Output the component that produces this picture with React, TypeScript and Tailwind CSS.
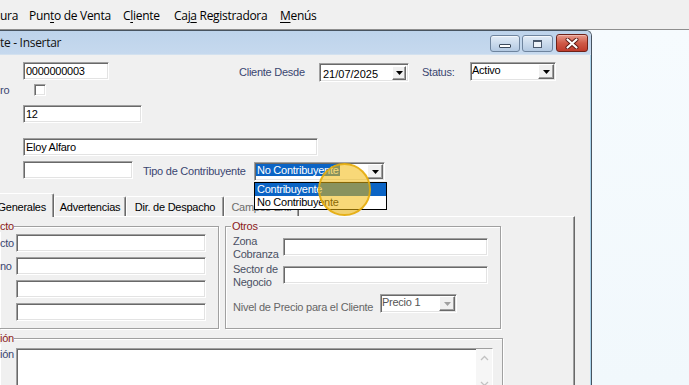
import React from "react";

const sunken =
  "bg-white border border-[#a0a0a0] border-r-white border-b-white shadow-[inset_1px_1px_0_#696969,inset_-1px_-1px_0_#e3e3e3]";
const raised =
  "bg-[#f0f0f0] border border-t-white border-l-white border-r-[#696969] border-b-[#696969] shadow-[inset_-1px_-1px_0_#a0a0a0]";

const Arrow: React.FC<{ color?: string }> = ({ color = "#000" }) => (
  <svg width="7" height="4" viewBox="0 0 7 4">
    <polygon points="0,0 7,0 3.5,4" fill={color} />
  </svg>
);

const TextBox: React.FC<{ w: string; value?: string }> = ({ w, value }) => (
  <div className={`${w} h-[18px] ${sunken} flex items-center pl-[2px] text-black leading-[12px]`}>
    {value}
  </div>
);

const Combo: React.FC<{ w: string; children?: React.ReactNode; disabled?: boolean }> = ({
  w,
  children,
  disabled,
}) => (
  <div
    className={`${w} h-[19px] ${sunken} ${disabled ? "bg-[#f7f7f7] text-[#555]" : "text-black"} flex items-start justify-between`}
  >
    <div className="pl-[1px] pt-[1px] leading-[13px] whitespace-nowrap">{children}</div>
    <div className={`w-[16px] h-[15px] mt-[1px] mr-[1px] ${raised} flex items-center justify-center`}>
      <Arrow color={disabled ? "#a0a0a0" : "#000"} />
    </div>
  </div>
);

const Tab: React.FC<{ label: string; w: string; selected?: boolean; muted?: boolean }> = ({
  label,
  w,
  selected,
  muted,
}) =>
  selected ? (
    <div
      className={`${w} h-[24px] -mb-[1px] relative z-10 bg-[#f0f0f0] border-t border-t-white border-r border-r-[#696969] shadow-[inset_-1px_0_0_#a0a0a0] rounded-tr-[2px] flex items-center justify-end pr-[7px] pt-[3px] text-black whitespace-nowrap`}
    >
      {label}
    </div>
  ) : (
    <div
      className={`${w} h-[20px] border-t border-l border-t-white border-l-white border-r border-r-[#696969] shadow-[inset_-1px_0_0_#a0a0a0] rounded-t-[2px] flex items-center justify-center pt-[1px] whitespace-nowrap ${muted ? "text-[#6d6d6d]" : "text-black"}`}
    >
      {label}
    </div>
  );

const legend = "leading-[12px] bg-[#f0f0f0] text-[#8b1a1a]";
const group =
  "border border-[#a0a0a0] shadow-[inset_1px_1px_0_#fff,1px_1px_0_#fff]";

const TitleButtons: React.FC = () => (
  <div className="flex items-start pt-[4px] pr-[3px]">
    <div className="w-[30px] h-[17px] rounded-[3px] border border-[#6e849e] bg-gradient-to-b from-[#e2ecf7] to-[#b3c9e2] shadow-[inset_0_1px_0_#f4f8fc] flex items-end justify-center pb-[3px]">
      <div className="w-[12px] h-[4px] bg-white border border-[#3c4a5c] rounded-[1px]" />
    </div>
    <div className="ml-[2px] w-[31px] h-[17px] rounded-[3px] border border-[#6e849e] bg-gradient-to-b from-[#e2ecf7] to-[#b3c9e2] shadow-[inset_0_1px_0_#f4f8fc] flex items-center justify-center">
      <div className="w-[9px] h-[8px] border border-[#4b5a6e] border-t-2 bg-[#eef3f9]" />
    </div>
    <div className="ml-[3px] w-[32px] h-[18px] -mt-[1px] rounded-[3px] border border-[#6e2219] bg-gradient-to-b from-[#e69a8c] via-[#cf5a48] to-[#bf3b2c] shadow-[inset_0_1px_0_#f0b8ae] flex items-center justify-center">
      <svg width="14" height="11" viewBox="0 0 14 11">
        <path d="M2.5 1.5 L11.5 9.5 M11.5 1.5 L2.5 9.5" stroke="#5a1a14" strokeWidth="4" strokeLinecap="round" />
        <path d="M2.5 1.5 L11.5 9.5 M11.5 1.5 L2.5 9.5" stroke="#fff" strokeWidth="2.2" strokeLinecap="round" />
      </svg>
    </div>
  </div>
);

export default function App() {
  return (
    <div className="w-[689px] h-[385px] overflow-hidden flex flex-col bg-[#f3f9fd] font-['Liberation_Sans',Arial,sans-serif]">
      {/* menu bar */}
      <div className="h-[30px] flex-none bg-[#f0f0f0] border-b border-[#8e8e8e] flex items-center pt-[3px] text-[12px] tracking-[-0.3px] text-black font-['Open_Sans',sans-serif]">
        <span className="w-[29px]">ura</span>
        <span className="w-[94px]">
          Pun<span className="underline underline-offset-2">t</span>o de Venta
        </span>
        <span className="w-[51px]">
          C<span className="underline underline-offset-2">l</span>iente
        </span>
        <span className="w-[106px]">
          Caj<span className="underline underline-offset-2">a</span> Registradora
        </span>
        <span>
          <span className="underline underline-offset-2">M</span>enús
        </span>
      </div>

      <div className="flex flex-1 min-h-0">
        {/* window */}
        <div className="w-[592px] flex-none flex flex-col border-t border-r border-[#47535f] rounded-tr-[6px] overflow-hidden">
          <div className="h-[24px] flex-none flex justify-between bg-gradient-to-b from-[#bdd3eb] to-[#c6d9ee] border-b border-[#d3e1ef]">
            <div className="flex items-center text-[12px] tracking-[-0.3px] text-[#111] font-['Open_Sans',sans-serif]">
              te - Insertar
            </div>
            <TitleButtons />
          </div>

          <div className="relative flex-1 bg-[#f0f0f0] shadow-[inset_-1px_0_0_#a9d3ec] flex flex-col text-[11px] tracking-[-0.25px] text-[#3a4670]">
            {/* row 1 */}
            <div className="mt-[7px] h-[20px] flex items-start">
              <div className="ml-[23px]">
                <TextBox w="w-[86px]" value="0000000003" />
              </div>
              <div className="ml-[130px] w-[80px] self-center">Cliente Desde</div>
              <div className={`w-[90px] h-[19px] mt-[1px] ${sunken} flex items-center justify-between`}>
                <div className="pl-[3px] pt-[4px] text-black leading-[13px] tracking-normal">21/07/2025</div>
                <div className={`w-[14px] h-[14px] mr-[2px] mt-[1px] ${raised} flex items-center justify-center`}>
                  <Arrow />
                </div>
              </div>
              <div className="ml-[13px] w-[48px] self-center">Status:</div>
              <Combo w="w-[86px]">Activo</Combo>
            </div>

            {/* row 2 */}
            <div className="mt-[2px] h-[12px] flex items-center">
              <div className="w-[34px] leading-[12px]">ro</div>
              <div className={`w-[12px] h-[12px] ${sunken}`} />
            </div>

            {/* row 3 */}
            <div className="mt-[9px] flex">
              <div className="ml-[23px]">
                <TextBox w="w-[119px]" value="12" />
              </div>
            </div>

            {/* row 4 */}
            <div className="mt-[15px] flex">
              <div className="ml-[23px]">
                <TextBox w="w-[295px]" value="Eloy Alfaro" />
              </div>
            </div>

            {/* row 5 */}
            <div className="mt-[5px] h-[20px] flex items-start">
              <div className="ml-[23px]">
                <TextBox w="w-[110px]" />
              </div>
              <div className="ml-[10px] w-[111px] self-center whitespace-nowrap">Tipo de Contribuyente</div>
              <div className="mt-[1px]">
                <Combo w="w-[131px]">
                  <span className="bg-[#0b64c5] text-white px-[1px]">No Contribuyente</span>
                </Combo>
              </div>
            </div>

            {/* tabs */}
            <div className="mt-[12px] h-[23px] flex items-end">
              <Tab label="Generales" w="w-[54px]" selected />
              <Tab label="Advertencias" w="w-[72px]" />
              <Tab label="Dir. de Despacho" w="w-[98px]" />
              <Tab label="Campos Ext." w="w-[75px]" muted />
            </div>

            {/* tab panel */}
            <div className="w-[575px] flex-1 border-t border-t-white border-r border-r-[#696969] shadow-[inset_-1px_0_0_#a0a0a0] flex flex-col">
              <div className="mt-[3px] flex items-start">
                <fieldset className={`w-[219px] ${group} border-l-0`}>
                  <legend className={legend}>cto</legend>
                  <div className="pt-[2px] pb-[7px] flex flex-col gap-[5px]">
                    {["cto", "no", "", ""].map((l, i) => (
                      <div key={i} className="flex items-center">
                        <div className="w-[16px]">{l}</div>
                        <TextBox w="w-[190px]" />
                      </div>
                    ))}
                  </div>
                </fieldset>

                <fieldset className={`ml-[6px] w-[276px] ${group}`}>
                  <legend className={`${legend} ml-[5px] px-[1px]`}>Otros</legend>
                  <div className="pl-[7px] pt-[2px] pb-[15px] flex flex-col text-[#4b5064]">
                    <div className="h-[26px] flex items-center">
                      <div className="w-[50px] self-start leading-[13px] pt-[1px]">
                        Zona
                        <br />
                        Cobranza
                      </div>
                      <TextBox w="w-[205px]" />
                    </div>
                    <div className="mt-[2px] h-[26px] flex items-center">
                      <div className="w-[50px] self-start leading-[13px] pt-[1px]">
                        Sector de
                        <br />
                        Negocio
                      </div>
                      <TextBox w="w-[205px]" />
                    </div>
                    <div className="mt-[6px] h-[19px] flex items-end">
                      <div className="w-[147px] leading-[12px] text-[#666] whitespace-nowrap">
                        Nivel de Precio para el Cliente
                      </div>
                      <Combo w="w-[77px]" disabled>
                        Precio 1
                      </Combo>
                    </div>
                  </div>
                </fieldset>
              </div>

              <fieldset className={`mt-[3px] w-[503px] ${group} border-l-0 flex-1`}>
                <legend className={legend}>ión</legend>
                <div className="pt-[4px] flex items-start">
                  <div className="w-[16px] leading-[12px]">ión</div>
                  <div className={`w-[477px] h-[46px] ${sunken} flex justify-end`}>
                    <div className="w-[16px] h-full bg-[#f6f6f6] flex flex-col items-center justify-between py-[6px]">
                      <svg width="9" height="6" viewBox="0 0 9 6">
                        <path d="M1 5 L4.5 1.5 L8 5" stroke="#c2c2c2" strokeWidth="1.3" fill="none" />
                      </svg>
                      <svg width="9" height="6" viewBox="0 0 9 6">
                        <path d="M1 1 L4.5 4.5 L8 1" stroke="#c2c2c2" strokeWidth="1.3" fill="none" />
                      </svg>
                    </div>
                  </div>
                </div>
              </fieldset>
            </div>

            {/* open dropdown list */}
            <div className="absolute left-[254px] top-[127px] w-[133px] border border-black bg-white text-black leading-[13px] z-20">
              <div className="bg-[#0b64c5] text-white pl-[2px]">Contribuyente</div>
              <div className="pl-[2px]">No Contribuyente</div>
            </div>

            {/* cursor highlight */}
            <div className="absolute left-[318px] top-[108px] w-[53px] h-[53px] rounded-full bg-[rgba(242,184,10,0.55)] border-2 border-[rgba(228,170,10,0.85)] z-30" />
          </div>
        </div>

        <div className="flex-1 bg-gradient-to-b from-[#f6fbfe] to-[#f1f8fc]" />
      </div>
    </div>
  );
}
